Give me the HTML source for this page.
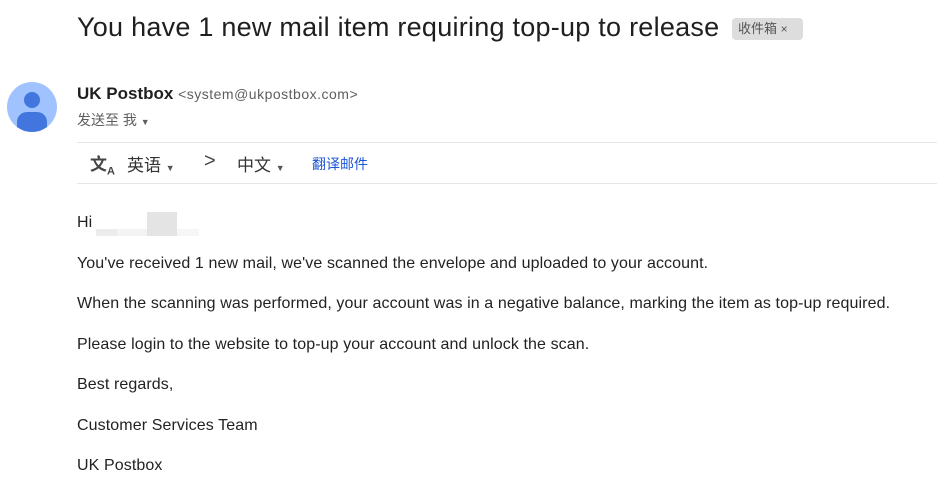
<!DOCTYPE html>
<html><head><meta charset="utf-8"><style>
body{margin:0;width:937px;height:484px;background:#fff;font-family:"Liberation Sans","Noto Sans CJK SC",sans-serif;position:relative;overflow:hidden;color:#222}
.a{position:absolute;white-space:nowrap}
.b{font-size:16px;letter-spacing:0.1px}
</style></head><body>
<div class="a" style="left:77px;top:12px;font-size:27px;letter-spacing:0.25px;color:#1f1f1f">You have 1 new mail item requiring top-up to release</div>
<div class="a" style="left:732px;top:18px;width:71px;height:22px;background:#ddd;border-radius:4px;font-size:13px;color:#555;line-height:22px;text-indent:6px">收件箱 <span style="font-size:12px">×</span></div>
<div class="a" style="left:7px;top:82px;width:50px;height:50px;border-radius:50%;background:#a0c3ff;overflow:hidden">
 <div style="position:absolute;left:17px;top:10px;width:16px;height:16px;border-radius:50%;background:#4375de"></div>
 <div style="position:absolute;left:10px;top:30px;width:30px;height:20px;border-radius:10px 10px 0 0;background:#4375de"></div>
</div>
<div class="a" style="left:77px;top:84px;font-size:17px;font-weight:bold;color:#1f1f1f">UK Postbox <span style="font-weight:normal;font-size:14px;letter-spacing:0.5px;color:#5e5e5e">&lt;system@ukpostbox.com&gt;</span></div>
<div class="a" style="left:77px;top:110px;font-size:14px;color:#5e5e5e">发送至 我 <span style="font-size:9px">▼</span></div>
<div class="a" style="left:77px;top:142px;width:860px;border-top:1px solid #e6e6e6"></div>
<div class="a" style="left:77px;top:183px;width:860px;border-top:1px solid #e6e6e6"></div>
<div class="a" style="left:90px;top:150px;font-size:17px;color:#444;font-weight:bold">文<sub style="font-size:11px">A</sub></div>
<div class="a" style="left:127px;top:151px;font-size:17px;color:#333">英语 <span style="font-size:9px;color:#555">▼</span></div>
<div class="a" style="left:204px;top:150px;font-size:20px;color:#444">&gt;</div>
<div class="a" style="left:237px;top:151px;font-size:17px;color:#333">中文 <span style="font-size:9px;color:#555">▼</span></div>
<div class="a" style="left:312px;top:154px;font-size:14px;color:#1a55d6">翻译邮件</div>
<div class="a b" style="left:77px;top:214px">Hi</div>
<div class="a" style="left:96px;top:229px;width:21px;height:7px;background:#ececec"></div>
<div class="a" style="left:117px;top:229px;width:30px;height:7px;background:#f3f3f3"></div>
<div class="a" style="left:147px;top:212px;width:30px;height:24px;background:#e4e4e4"></div>
<div class="a" style="left:177px;top:229px;width:22px;height:7px;background:#f6f6f6"></div>
<div class="a b" style="left:77px;top:255px">You've received 1 new mail, we've scanned the envelope and uploaded to your account.</div>
<div class="a b" style="left:77px;top:295px">When the scanning was performed, your account was in a negative balance, marking the item as top-up required.</div>
<div class="a b" style="left:77px;top:336px">Please login to the website to top-up your account and unlock the scan.</div>
<div class="a b" style="left:77px;top:376px">Best regards,</div>
<div class="a b" style="left:77px;top:417px">Customer Services Team</div>
<div class="a b" style="left:77px;top:457px">UK Postbox</div>
</body></html>
